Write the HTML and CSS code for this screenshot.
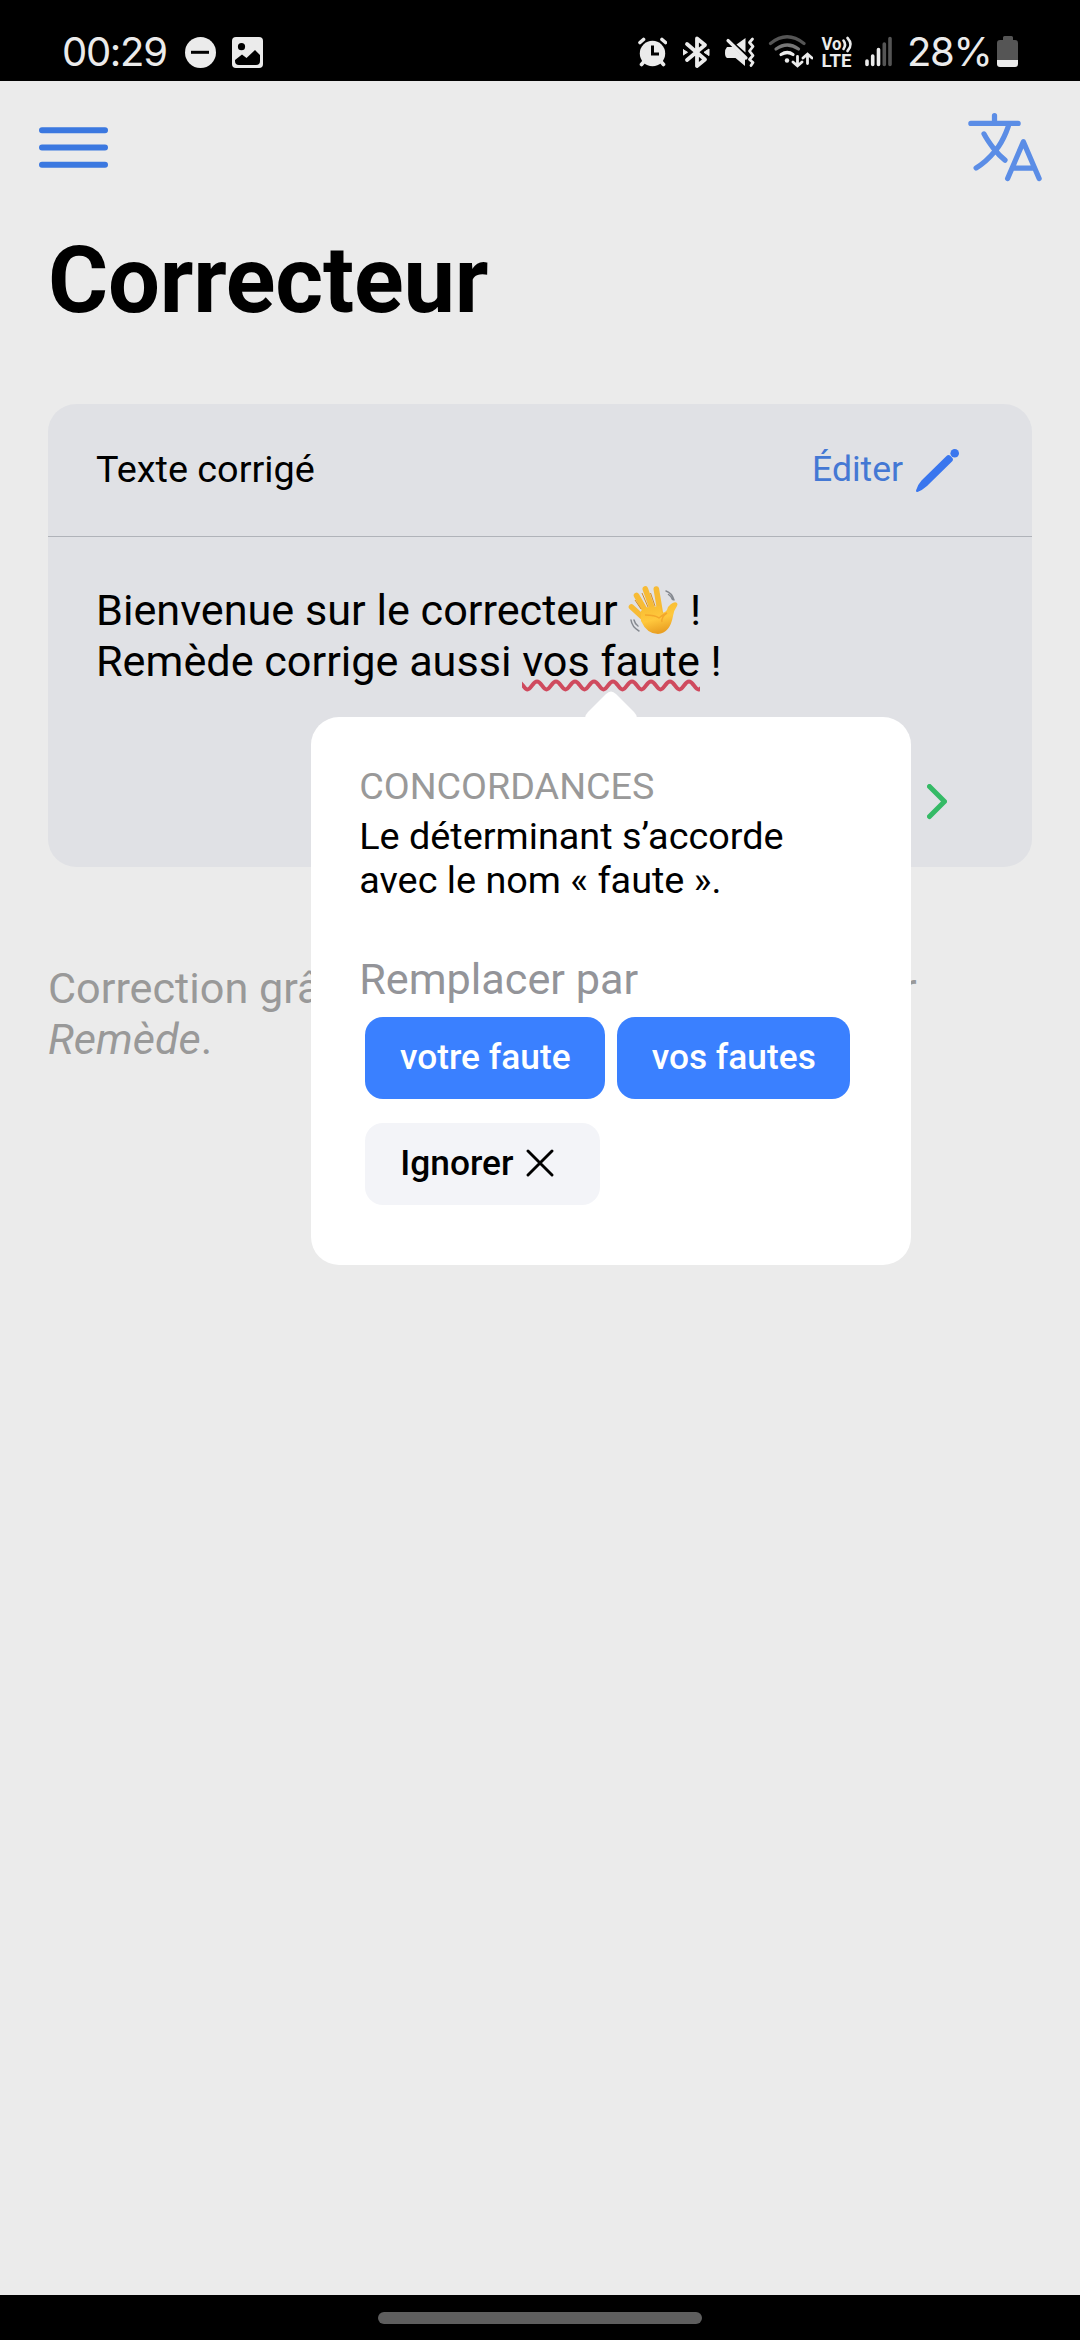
FILE: index.html
```html
<!DOCTYPE html>
<html lang="fr">
<head>
<meta charset="utf-8">
<title>Correcteur</title>
<link rel="stylesheet" href="styles.css">
</head>
<body>
<div class="screen">
  <div class="status">
    <span class="clock">00:29</span>
    <svg class="dnd" width="31" height="34" viewBox="185 35 31 34"><circle cx="200.5" cy="52.5" r="15.5" fill="#ebebeb"/><path d="M191 52.3h18" stroke="#000" stroke-width="3"/></svg>
    <svg class="pic" width="31" height="34" viewBox="232 35 31 34"><rect x="232" y="37" width="31" height="31" rx="4" fill="#ebebeb"/><circle cx="241.500" cy="46.700" r="3.600"/><path d="M235 60l7-5.500 4.500 3.500 8.500-8 5 5v6q0 4-4 4h-17q-4 0-4-4z"/></svg>
    <div class="indicators">
      <svg class="alarm" width="29" height="34" viewBox="638 35 29 34"><circle cx="652.500" cy="53.500" r="12.700" fill="#ebebeb"/><path d="M640 42.500l3.500-3M665.500 42.500l-3.500-3M644.500 61l-3 3.500M660.500 61l3 3.500" stroke="#ebebeb" stroke-width="3.600" stroke-linecap="round"/><path d="M652.500 45.500v8.500h6.500" fill="none" stroke="#000" stroke-width="3"/></svg>
      <svg class="bt" width="28" height="34" viewBox="683 35 28 34"><path d="M687 44l18 15.500-8 6.500V38.500l8 6.500-18 15" fill="none" stroke="#ebebeb" stroke-width="3.800" stroke-linecap="round" stroke-linejoin="round"/><path d="M683 49.500l4.500 2.800-4.500 2.800zM709 49l-5 3.300 5 3.300z" fill="#ebebeb" stroke="#ebebeb" stroke-linejoin="round"/></svg>
      <svg class="mute" width="31" height="34" viewBox="725 35 31 34"><path d="M727 47h6l12 11.500V66l-9.500-8H727q-2-1-2-5t2-6zM745.500 38v14.500l-9-8z" fill="#ebebeb"/><path d="M728 40.500l18 17.500" stroke="#ebebeb" stroke-width="3.200" stroke-linecap="round"/><path d="M752.500 39l-3 3.500 3.500 4-3.500 4.500 3.500 4.500-3.500 4 3.500 3-2 3" fill="none" stroke="#ebebeb" stroke-width="2.800" stroke-linecap="round" stroke-linejoin="round"/></svg>
      <svg class="wifi" width="45" height="34" viewBox="768 35 45 34"><g fill="none" stroke-width="3.200" stroke-linecap="round"><path d="M770.500 43.500q16.500-13.500 33.500 0" stroke="#555"/><path d="M776 49q11.500-8 22.500 0" stroke="#777"/><path d="M781 54.500q6.500-4 12 0" stroke="#ebebeb"/><path d="M797.500 56.500v9M793 62l4.500 4 4.500-4M807.500 63.500v-9M803 58l4.500-4 4.500 4" stroke="#ebebeb" stroke-width="2.800"/></g><circle cx="787" cy="60.500" r="2.200" fill="#ebebeb"/></svg>
      <svg class="volte" width="32" height="34" viewBox="821 35 32 34"><g fill="#ebebeb" class="volte-text"><text x="821.500" y="50" textLength="20" lengthAdjust="spacingAndGlyphs">Vo</text><text x="821.500" y="67" textLength="30" lengthAdjust="spacingAndGlyphs">LTE</text></g><path d="M843.500 40.500q3 4 0 8.500M847.500 38q6 6.500 0 13" fill="none" stroke="#ebebeb" stroke-width="2.600" stroke-linecap="round"/></svg>
      <svg class="signal" width="28" height="34" viewBox="865 35 28 34"><g stroke-width="3.600" stroke-linecap="round" stroke="#ebebeb"><path d="M867 61v3.500M872.700 56v8.500M878.500 49.500v15"/><path d="M884.300 44v20.500M890 38.500v26" stroke="#555"/></g></svg>
      <span class="percent">28%</span>
      <svg class="battery" width="22" height="34" viewBox="997 35 22 34"><path d="M1003 39v-1.500q0-1.500 1.500-1.500h7q1.500 0 1.500 1.500V40h2q3 0 3 3v17H997V43q0-3 3-3h3z" fill="#555"/><path d="M997 60h21v4q0 3-3 3h-15q-3 0-3-3z" fill="#ebebeb"/></svg>
    </div>
  </div>

  <main class="page">
    <header class="toolbar">
      <svg class="menu" width="70" height="42" viewBox="0 0 70 42" stroke="#3b78e0" stroke-width="6" stroke-linecap="round"><path d="M3 3.200h63M3 20.500h63M3 37.800h63"/></svg>
      <svg class="lang" width="84" height="84" viewBox="0 0 512 512" fill="none" stroke="#5b8de6" stroke-width="32" stroke-linecap="round" stroke-linejoin="round"><path d="M48 112h288M192 64v48M272 448l96-224 96 224M301.500 384h133M281.300 112S257 206 199 277 80 384 80 384M256 336s-35-27-72-75-56-85-56-85"/></svg>
    </header>
    <h1 class="title">Correcteur</h1>

    <section class="card">
      <div class="card-head">
        <span class="card-title">Texte corrigé</span>
        <span class="edit">Éditer
          <svg class="pencil" width="44" height="44" viewBox="0 0 44 44" fill="#3a76ee"><path d="M30.500 7Q32.500 5 34.500 7L36 8.500Q38 10.500 36 12.500L11 37Q6 41.500 1.500 42.900Q-.5 43.200 .2 41Q1.500 36 5.500 31.500z"/><circle cx="38.700" cy="4.300" r="4.300"/></svg>
        </span>
      </div>
      <div class="card-body">
        <p class="text">Bienvenue sur le correcteur <svg class="wave" width="51" height="50" viewBox="0 0 51 50"><defs><linearGradient id="skin" x1="0" y1="0" x2="0.3" y2="1"><stop offset="0" stop-color="#f5b92f"/><stop offset="0.600" stop-color="#ffc83d"/><stop offset="1" stop-color="#eaa023"/></linearGradient></defs><g stroke="#f7bb35" stroke-width="5.600" stroke-linecap="round" fill="none"><path d="M3.500 22l12 11M8.500 10.500l11 19M17.300 4l8.500 24M28.300 4l4 24"/></g><path d="M13 26q4-4 8-4l11-1 2 7q3 0 5-3 1-4 4-6 4-3 6-1 1 1 0 3-3 4-4 10-3 17-15 18-11 0-17-13z" fill="url(#skin)"/><path d="M13 24l-6-9M20 22L14 8M27 21L22.500 8" stroke="#d58b20" stroke-width="1" fill="none"/><path d="M17 30q10 0 14 3 5-4 8-5-6 4-5 9" stroke="#f3a72b" stroke-width="1.500" fill="none"/><path d="M38 6q6 2 8 9M40.500 9.500q3 2 4 5M3 35q1 7 8 11M6 35q1 4 4 6" stroke="#858990" stroke-width="1.500" fill="none" stroke-linecap="round"/></svg> !<br>Remède corrige aussi <span class="mistake">vos faute<svg class="squiggle" width="178" height="13" viewBox="0 0 178 13"><path d="M-4 2.500C0 2.500 2 10.500 5.500 10.500S11 2.500 15 2.500 21 10.500 24.500 10.500 30 2.500 34 2.500 40 10.500 43.500 10.500 49 2.500 53 2.500 59 10.500 62.500 10.500 68 2.500 72 2.500 78 10.500 81.500 10.500 87 2.500 91 2.500 97 10.500 100.500 10.500 106 2.500 110 2.500 116 10.500 119.500 10.500 125 2.500 129 2.500 135 10.500 138.500 10.500 144 2.500 148 2.500 154 10.500 157.500 10.500 163 2.500 167 2.500 173 10.500 176.500 10.500 182 2.500 186 2.500" fill="none" stroke="#cf4a5e" stroke-width="4"/></svg>
          <span class="popover">
            <svg class="arrow" width="54" height="28" viewBox="0 0 54 28"><path d="M1 28Q1 25 4 22L22 4Q27-1 32 4L50 22Q53 25 53 28z" fill="#fff"/></svg>
            <span class="kind">CONCORDANCES</span>
            <span class="reason">Le déterminant s’accorde<br>avec le nom « faute ».</span>
            <span class="replace">Remplacer par</span>
            <span class="choices">
              <button class="choice">votre faute</button>
              <button class="choice second">vos fautes</button>
              <button class="choice ignore">Ignorer <svg width="28" height="28" viewBox="0 0 28 28"><path d="M2 2l24 24M26 2L2 26" stroke="#000" stroke-width="2.900" stroke-linecap="round"/></svg></button>
            </span>
          </span></span> !</p>
        <svg class="next" width="20" height="36" viewBox="0 0 20 36"><path d="M2.500 2.500L17.500 17.500 2.500 32.500" fill="none" stroke="#35ba66" stroke-width="5" stroke-linecap="round" stroke-linejoin="round"/></svg>
      </div>
    </section>
    <p class="credit">Correction grâce à <span class="source">Grammalecte, modifié</span> par<br><i>Remède</i>.</p>
  </main>
  <div class="navbar"><div class="handle"></div></div>
</div>
</body>
</html>
```
FILE: styles.css
```css
* { box-sizing: border-box; }
body { margin: 0; font-family: Roboto, sans-serif; color: #000; background: #ebebeb; }
svg { display: block; flex: none; }
h1, p { margin: 0; }
.screen { width: 1080px; height: 2340px; display: flex; flex-direction: column; overflow: hidden; }

.status { height: 81px; flex: none; background: #000; color: #ebebeb; display: flex; align-items: flex-start; padding: 35px 61px 0 62px; font-family: Inter, sans-serif; }
.clock { width: 123px; font-size: 40px; line-height: 34px; letter-spacing: -1.3px; white-space: nowrap; }
.pic { margin-left: 16px; }
.indicators { display: flex; margin-left: auto; }
.bt { margin-left: 16px; }
.mute { margin-left: 14px; }
.wifi { margin-left: 12px; }
.volte { margin-left: 8px; overflow: visible; }
.volte-text { font: 700 17.500px Roboto, sans-serif; }
.signal { margin-left: 12px; }
.percent { width: 90px; margin-left: 14px; font-size: 40px; line-height: 34px; letter-spacing: -1.300px; }

.page { flex: 1; }
.toolbar { height: 136px; display: flex; justify-content: space-between; padding: 24px 33px 0 39px; }
.menu { margin-top: 22px; }
.title { padding: 0 48px; height: 187px; font-size: 92px; line-height: 127px; font-weight: 700; letter-spacing: -0.2px; }

.card { margin: 0 48px; height: 463px; background: #e0e1e5; border-radius: 28px; }
.card-head { height: 133px; border-bottom: 1px solid #b0b3b9; padding: 0 72px 2px 48px; display: flex; align-items: center; justify-content: space-between; }
.card-title { font-size: 37.800px; }
.edit { display: flex; align-items: center; gap: 13px; font-size: 35.500px; color: #4478d4; }
.pencil { margin-top: 3px; }
.card-body { position: relative; padding: 48px; }
.text { font-size: 43.200px; line-height: 51.300px; white-space: nowrap; }
.wave { display: inline-block; vertical-align: -10px; }
.mistake { position: relative; }
.squiggle { position: absolute; left: 0; top: 43px; }
.next { margin: 96px 0 0 831px; }

.popover { position: absolute; left: -211px; top: 81px; width: 600px; height: 548px; background: #fff; border-radius: 28px; padding: 46px 48px; display: flex; flex-direction: column; }
.arrow { position: absolute; left: 273px; top: -27px; }
.kind { font-size: 37.700px; line-height: 46px; color: #999; }
.reason { font-size: 37.800px; line-height: 44px; margin-top: 5px; }
.replace { font-size: 43.200px; line-height: 50px; color: #939499; margin-top: 53px; }
.choices { display: flex; flex-wrap: wrap; gap: 24px 12px; margin: 12px 6px 0; }
.choice { width: 240px; height: 82px; border: 0; border-radius: 18px; padding: 0 0 2px; background: #3a80ff; color: #fff; font: 500 35.300px Roboto, sans-serif; display: flex; align-items: center; justify-content: center; }
.second { width: 233px; }
.ignore { width: 235px; background: #f3f4f8; color: #000; justify-content: flex-start; padding-left: 35px; gap: 13px; }

.credit { padding: 0 48px; margin-top: 96px; font-size: 43.200px; line-height: 51.300px; color: #999; white-space: nowrap; }
.source { letter-spacing: 0.430px; }
.navbar { height: 45px; flex: none; background: #000; display: flex; justify-content: center; padding-top: 17px; }
.handle { width: 324px; height: 12px; border-radius: 6px; background: #5e5e5e; }
```
